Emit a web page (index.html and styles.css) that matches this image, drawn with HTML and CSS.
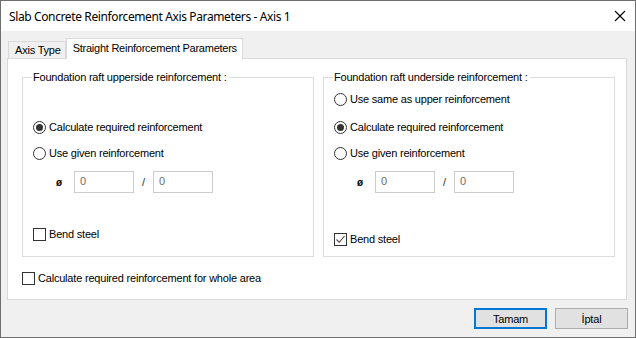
FILE: index.html
```html
<!DOCTYPE html>
<html lang="en">
<head>
    <meta charset="UTF-8">
    <title>Slab Concrete Reinforcement Axis Parameters - Axis 1</title>
    <link rel="stylesheet" href="styles.css">
</head>
<body>
    <div class="window">
        <div class="titlebar">
            <span class="title">Slab Concrete Reinforcement Axis Parameters - Axis 1</span>
            <svg class="close" width="12" height="12" viewBox="0 0 12 12">
                <path d="M1 1 L11 11 M11 1 L1 11" stroke="#000" stroke-width="1.1" fill="none"/>
            </svg>
        </div>

        <div class="content">
            <div class="tabs">
                <div class="tab">Axis Type</div>
                <div class="tab active">Straight Reinforcement Parameters</div>
            </div>

            <div class="panel">
                <div class="groups">
                    <fieldset class="group upper">
                        <legend>Foundation raft upperside reinforcement :</legend>
                        <div class="opt first">
                            <span class="radio checked"></span>Calculate required reinforcement
                        </div>
                        <div class="opt">
                            <span class="radio"></span>Use given reinforcement
                        </div>
                        <div class="given">
                            <span class="dia">ø</span>
                            <span class="field">0</span>
                            <span class="slash">/</span>
                            <span class="field">0</span>
                        </div>
                        <div class="opt bend">
                            <span class="check"></span>Bend steel
                        </div>
                    </fieldset>

                    <fieldset class="group lower">
                        <legend>Foundation raft underside reinforcement :</legend>
                        <div class="opt first">
                            <span class="radio"></span>Use same as upper reinforcement
                        </div>
                        <div class="opt">
                            <span class="radio checked"></span>Calculate required reinforcement
                        </div>
                        <div class="opt">
                            <span class="radio"></span>Use given reinforcement
                        </div>
                        <div class="given">
                            <span class="dia">ø</span>
                            <span class="field">0</span>
                            <span class="slash">/</span>
                            <span class="field">0</span>
                        </div>
                        <div class="opt bend">
                            <span class="check checked">
                                <svg width="11" height="11" viewBox="0 0 11 11">
                                    <path d="M1.5 5.5 L4.2 8.3 L9.6 2" stroke="#444" stroke-width="1.1" fill="none"/>
                                </svg>
                            </span>Bend steel
                        </div>
                    </fieldset>
                </div>

                <div class="opt whole">
                    <span class="check"></span>Calculate required reinforcement for whole area
                </div>
            </div>

            <div class="buttons">
                <button class="btn default">Tamam</button>
                <button class="btn">İptal</button>
            </div>
        </div>
    </div>
</body>
</html>
```

FILE: styles.css
```css
* {
    margin: 0;
    padding: 0;
    box-sizing: border-box;
}

body {
    font-family: 'Liberation Sans', Arial, sans-serif;
    font-size: 11px;
    letter-spacing: -0.2px;
    color: #000;
    background: #fff;
}

.window {
    width: 636px;
    height: 338px;
    border: 1px solid #6f6f6f;
    background: #f0f0f0;
    display: flex;
    flex-direction: column;
}

.titlebar {
    height: 30px;
    background: #fff;
    display: flex;
    align-items: center;
    justify-content: space-between;
    padding: 0 9px 0 8px;
}

.title {
    font-family: 'Noto Sans', 'Open Sans', sans-serif;
    font-size: 12px;
    letter-spacing: -0.38px;
}

.content {
    flex: 1;
    padding: 7px 7px 0 6px;
}

/* tabs */
.tabs {
    display: flex;
    align-items: flex-end;
    height: 20px;
    padding-left: 1px;
}

.tab {
    height: 17px;
    padding: 0 4px 0 6px;
    border: 1px solid #d9d9d9;
    border-bottom: none;
    background: #f0f0f0;
    line-height: 16px;
}

.tab.active {
    height: 21px;
    margin-bottom: -1px;
    padding: 0 5px 0 6px;
    background: #fff;
    position: relative;
    line-height: 19px;
    letter-spacing: -0.25px;
}

.panel {
    width: 620px;
    height: 242px;
    background: #fff;
    border: 1px solid #d9d9d9;
    padding: 11px 0 0 14px;
}

.groups {
    display: flex;
    gap: 9px;
}

.group {
    width: 292px;
    height: 187px;
    border: 1px solid #dcdcdc;
    padding: 0 10px;
}

.group legend {
    padding: 0 2px 0 1px;
    margin-left: -1px;
    line-height: 15px;
}

/* options */
.opt {
    display: flex;
    align-items: center;
    height: 16px;
}

.upper .opt.first {
    margin-top: 34px;
}

.lower .opt.first {
    margin-top: 6px;
}

.lower .opt + .opt {
    margin-top: 12px;
}

.upper .opt + .opt {
    margin-top: 10px;
}

.lower .opt + .opt + .opt {
    margin-top: 10px;
}

.radio {
    width: 13px;
    height: 13px;
    border: 1px solid #333;
    border-radius: 50%;
    background: #fff;
    margin-right: 3px;
    display: flex;
    align-items: center;
    justify-content: center;
}

.radio.checked::after {
    content: "";
    width: 7px;
    height: 7px;
    border-radius: 50%;
    background: #333;
}

.check {
    width: 13px;
    height: 13px;
    border: 1px solid #333;
    background: #fff;
    margin-right: 3px;
    display: flex;
    align-items: center;
    justify-content: center;
}

.given {
    display: flex;
    align-items: center;
    margin-top: 10px;
    height: 22px;
}

.dia {
    width: 18px;
    margin-left: 23px;
    font-size: 10px;
    font-weight: bold;
}

.field {
    width: 60px;
    height: 22px;
    border: 1px solid #cccccc;
    color: #6d6d6d;
    padding: 2px 0 0 5px;
    line-height: 14px;
}

.slash {
    width: 19px;
    text-align: center;
    color: #333;
}

.upper .bend {
    margin-top: 33px;
}

.lower .bend {
    margin-top: 38px;
}

.whole {
    margin-top: 13px;
}

/* buttons */
.buttons {
    display: flex;
    justify-content: flex-end;
    gap: 8px;
    margin-top: 8px;
}

.btn {
    width: 73px;
    height: 21px;
    font-family: 'Liberation Sans', Arial, sans-serif;
    font-size: 11px;
    letter-spacing: -0.2px;
    color: #000;
    background: #e1e1e1;
    border: 1px solid #adadad;
}

.btn.default {
    border: 2px solid #0078d7;
}
```
